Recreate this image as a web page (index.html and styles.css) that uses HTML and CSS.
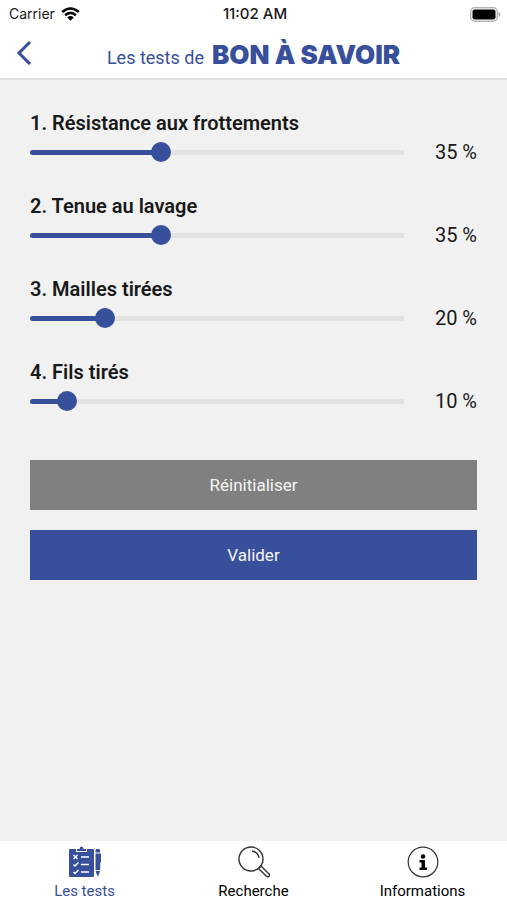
FILE: index.html
```html
<!DOCTYPE html>
<html lang="fr">
<head>
<meta charset="utf-8">
<meta name="viewport" content="width=device-width, initial-scale=1">
<title>Les tests de Bon à Savoir</title>
<link rel="stylesheet" href="styles.css">
</head>
<body>
<header class="top">
  <div class="status">
    <span class="carrier">Carrier
      <svg width="19" height="14" viewBox="0 0 19 14" fill="none" stroke="#000" stroke-width="2.6" aria-hidden="true"><path d="M1.2 5.1Q9.5-2.1 17.8 5.1M4.1 8.2Q9.500 3.700 14.900 8.200"/><path d="M9.500 13.700 6.200 10.400Q9.500 7.800 12.800 10.400Z" fill="#000" stroke="none"/></svg>
    </span>
    <time class="clock">11:02 AM</time>
    <svg class="battery" width="31" height="15" viewBox="0 0 31 15" aria-hidden="true"><rect x=".7" y=".7" width="26.600" height="13.600" rx="4" fill="#fff" stroke="#b5b5b5" stroke-width="1.400"/><rect x="2.500" y="2.500" width="23" height="10" rx="2"/><path d="M28.500 5q2 .7 2 2.500t-2 2.500z" fill="#aaa"/></svg>
  </div>
  <div class="titlebar">
    <a class="back" href="#" aria-label="Retour"><svg width="16" height="24" viewBox="0 0 16 24" fill="none" stroke="#384f9b" stroke-width="3"><path d="M14 1 3 12l11 11"/></svg></a>
    <h1 class="title">Les tests de <strong class="brand">BON À SAVOIR</strong></h1>
  </div>
</header>
<main class="content">
  <form class="criteria">
    <div class="criterion">
      <label class="name" for="c1">1. Résistance aux frottements</label>
      <div class="slider" style="--value: 35%"><input id="c1" type="range" min="0" max="100" value="35"></div>
      <output class="percent" for="c1">35 %</output>
    </div>
    <div class="criterion">
      <label class="name" for="c2">2. Tenue au lavage</label>
      <div class="slider" style="--value: 35%"><input id="c2" type="range" min="0" max="100" value="35"></div>
      <output class="percent" for="c2">35 %</output>
    </div>
    <div class="criterion">
      <label class="name" for="c3">3. Mailles tirées</label>
      <div class="slider" style="--value: 20%"><input id="c3" type="range" min="0" max="100" value="20"></div>
      <output class="percent" for="c3">20 %</output>
    </div>
    <div class="criterion">
      <label class="name" for="c4">4. Fils tirés</label>
      <div class="slider" style="--value: 10%"><input id="c4" type="range" min="0" max="100" value="10"></div>
      <output class="percent" for="c4">10 %</output>
    </div>
    <div class="actions">
      <button class="button" type="reset">Réinitialiser</button>
      <button class="button primary" type="submit">Valider</button>
    </div>
  </form>
</main>
<nav class="tabs">
  <a class="tab active" href="#">
    <svg width="32" height="32" viewBox="0 0 32 32" aria-hidden="true"><path fill="#384f9b" d="M1 3h6v3h11V3h6q1 0 1 1v26q0 1-1 1H1q-1 0-1-1V4q0-1 1-1Z"/><path fill="#384f9b" d="M8 5V3h2.500q0-2.500 2-2.500t2 2.500H17v2Z"/><path fill="none" stroke="#fff" stroke-width="1.400" d="M12 11h8M12 18.500h8M12 26h8M4.500 9l4 4M8.500 9l-4 4M4.500 18.500l1.500 1.500 3.500-3.500M4.500 26l1.500 1.500L9.500 24"/><path fill="#384f9b" d="M26.500 6.500V4.500q0-1.500 1-1.500h2.500q1 0 1 1.500v2ZM26.500 7.500h5.500v9h-.8v7.500h-4.700ZM26.500 25h4.700l-1.400 3.500-.9 2.500-1-2.500Z"/></svg>
    <span>Les tests</span>
  </a>
  <a class="tab" href="#">
    <svg width="32" height="32" viewBox="0 0 32 32" fill="none" stroke="#333" stroke-width="1.400" aria-hidden="true"><circle cx="13" cy="13" r="12"/><path d="M14 5q6 1 7 7M20.500 22.500l2.500-2.500 8 8q1 1 0 2.200-1.300 1.200-2.500.1Z"/></svg>
    <span>Recherche</span>
  </a>
  <a class="tab" href="#">
    <svg width="32" height="32" viewBox="0 0 32 32" aria-hidden="true"><circle cx="16" cy="16" r="14.800" fill="none" stroke="#333" stroke-width="1.200"/><circle cx="16" cy="10.500" r="2.200"/><path d="M12.500 14h5.500v7.500h2V24h-7.500v-2.500h2v-5h-2Z"/></svg>
    <span>Informations</span>
  </a>
</nav>
</body>
</html>
```
FILE: styles.css
```css
* { box-sizing: border-box; }

body {
  margin: 0;
  min-height: 100vh;
  display: flex;
  flex-direction: column;
  background: #f1f1f1;
  color: #191919;
  font-family: Roboto, "Liberation Sans", sans-serif;
}

a { color: inherit; text-decoration: none; }

.top {
  background: #fff;
  border-bottom: 2px solid #e2e2e2;
}

.status {
  display: grid;
  grid-template-columns: 1fr auto 1fr;
  align-items: center;
  height: 28px;
  padding: 0 6px 0 9px;
  font: 14px/20px Inter, sans-serif;
}

.carrier { display: flex; align-items: center; gap: 6px; }
.clock { font-size: 15px; font-weight: 500; }
.battery { justify-self: end; }

.titlebar {
  display: grid;
  grid-template-columns: 32px 1fr 32px;
  align-items: center;
  height: 50px;
  padding: 0 16px;
  color: #384f9b;
}

.back { display: flex; }

.title {
  display: flex;
  justify-content: center;
  align-items: baseline;
  gap: 8px;
  margin: 0;
  padding-top: 6px;
  white-space: nowrap;
  font-size: 18px;
  font-weight: 400;
  line-height: 36px;
}

.brand {
  font-family: Inter, sans-serif;
  font-size: 26px;
  font-weight: 900;
}

.content { flex: 1; padding: 30px; }

.criteria {
  display: flex;
  flex-direction: column;
  gap: 25px;
}

.criterion {
  display: grid;
  grid-template-columns: 1fr 73px;
  grid-template-rows: 26px 32px;
  align-items: center;
}

.name {
  grid-column: 1 / -1;
  font-size: 20px;
  font-weight: 600;
  line-height: 26px;
}

.slider { display: grid; align-items: center; }

.slider::before,
.slider::after,
.slider input { grid-area: 1 / 1; }

.slider::before,
.slider::after {
  content: "";
  height: 5px;
  border-radius: 3px 0 0 3px;
  background: #e2e2e2;
}

.slider::after { width: var(--value); background: #384f9b; }

.slider input {
  z-index: 1;
  appearance: none;
  width: calc(100% + 20px);
  height: 20px;
  margin: 0 -10px;
  background: none;
}

.slider input::-webkit-slider-thumb {
  appearance: none;
  width: 20px;
  height: 20px;
  border-radius: 50%;
  background: #384f9b;
}

.percent { text-align: right; font-size: 20px; }

.actions {
  display: grid;
  gap: 20px;
  padding-top: 18px;
}

.button {
  height: 50px;
  border: 0;
  background: #808080;
  color: #f5f5f5;
  font: 17px Roboto, sans-serif;
}

.primary { background: #384f9b; }

.tabs {
  display: grid;
  grid-template-columns: repeat(3, 1fr);
  height: 59px;
  padding-top: 5px;
  background: #fff;
  color: #000;
}

.tab {
  display: flex;
  flex-direction: column;
  align-items: center;
  gap: 4px;
  font-size: 15px;
  line-height: 18px;
}

.active { color: #384f9b; }
```
